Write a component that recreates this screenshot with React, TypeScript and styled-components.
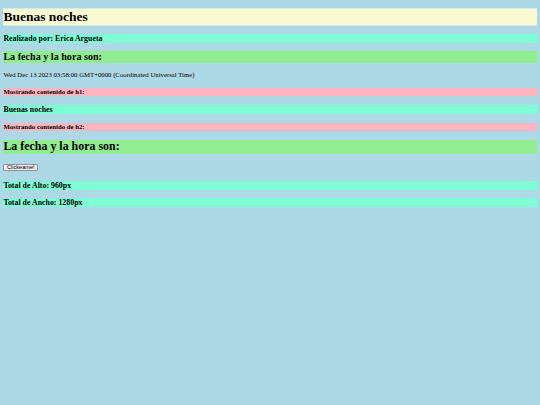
import * as React from 'react'
import styled, { createGlobalStyle } from 'styled-components'

// the reference is a 1280x960 page shrunk to 540x405, so every size is scaled
const scale = 0.421875
const px = (n: number) => `${(n * scale).toFixed(3)}px`

const GlobalStyle = createGlobalStyle`
  body {
    margin: 0 ${px(8)} ${px(8)};
    background: lightblue;
    font-family: 'Liberation Serif', 'Times New Roman', serif;
    font-size: ${px(16)};
    line-height: ${px(18.5)};
    color: #000;
  }
`

const colors = {
  yellow: 'lightgoldenrodyellow',
  aqua: 'aquamarine',
  green: 'lightgreen',
  pink: 'lightpink',
}

const Title = styled.h1<{ $framed?: boolean }>`
  font-size: ${px(32)};
  line-height: ${px(37)};
  margin: ${px(21.44)} 0;
  background: ${colors.yellow};
  box-shadow: ${p => (p.$framed ? '0 0 0 1px rgba(255, 255, 255, 0.45)' : 'none')};
`

const Subtitle = styled.h2<{ $big?: boolean }>`
  font-size: ${p => (p.$big ? px(28.3) : px(24))};
  line-height: ${p => (p.$big ? px(33) : px(27))};
  margin: ${p => (p.$big ? px(21.44) : px(19.92))} 0;
  background: ${colors.green};
`

const Label = styled.h3`
  font-size: ${px(18.72)};
  line-height: ${px(22)};
  margin: ${px(18.72)} 0;
  background: ${colors.aqua};
`

const Note = styled.h4`
  font-size: ${px(16)};
  line-height: ${px(18.5)};
  margin: ${px(21.28)} 0;
  background: ${colors.pink};
`

const DateLine = styled.p`
  margin: ${px(16)} 0;
`

const ButtonRow = styled.div`
  display: flex;
  padding: ${px(2.9)} 0 ${px(4.3)};
`

const ClickButton = styled.button`
  height: ${px(17.4)};
  padding: 0 ${px(6)};
  font-family: 'Liberation Sans', Arial, sans-serif;
  font-size: ${px(13.333)};
  line-height: 1;
  border: 1px solid #8f8f9d;
  border-radius: 1px;
  background: #efefef;
  color: #000;
`

const App = () => {
  return (
    <>
      <GlobalStyle />
      <Title $framed>Buenas noches</Title>
      <Label>Realizado por: Erica Argueta</Label>
      <Subtitle>La fecha y la hora son:</Subtitle>
      <DateLine>Wed Dec 13 2023 03:58:00 GMT+0000 (Coordinated Universal Time)</DateLine>
      <Note>Mostrando contenido de h1:</Note>
      <Label>Buenas noches</Label>
      <Note>Mostrando contenido de h2:</Note>
      <Subtitle $big>La fecha y la hora son:</Subtitle>
      <ButtonRow>
        <ClickButton>Clickeame!</ClickButton>
      </ButtonRow>
      <Label>Total de Alto: 960px</Label>
      <Label>Total de Ancho: 1280px</Label>
    </>
  )
}

export default App
